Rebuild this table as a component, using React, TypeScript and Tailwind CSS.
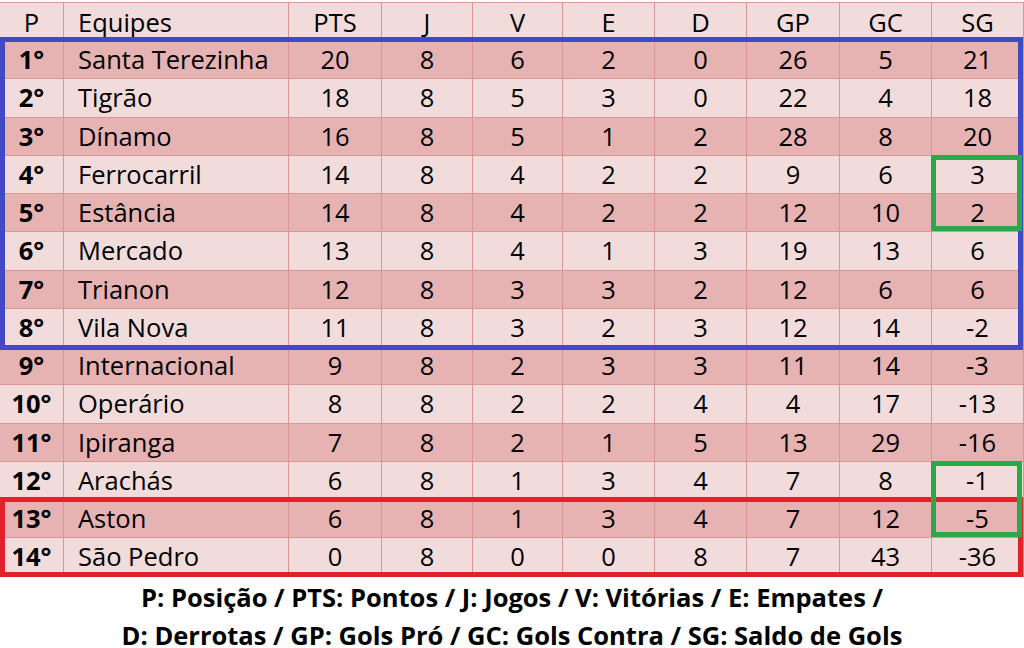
const rows: (string | number)[][] = [
  ['1°', 'Santa Terezinha', 20, 8, 6, 2, 0, 26, 5, 21],
  ['2°', 'Tigrão', 18, 8, 5, 3, 0, 22, 4, 18],
  ['3°', 'Dínamo', 16, 8, 5, 1, 2, 28, 8, 20],
  ['4°', 'Ferrocarril', 14, 8, 4, 2, 2, 9, 6, 3],
  ['5°', 'Estância', 14, 8, 4, 2, 2, 12, 10, 2],
  ['6°', 'Mercado', 13, 8, 4, 1, 3, 19, 13, 6],
  ['7°', 'Trianon', 12, 8, 3, 3, 2, 12, 6, 6],
  ['8°', 'Vila Nova', 11, 8, 3, 2, 3, 12, 14, -2],
  ['9°', 'Internacional', 9, 8, 2, 3, 3, 11, 14, -3],
  ['10°', 'Operário', 8, 8, 2, 2, 4, 4, 17, -13],
  ['11°', 'Ipiranga', 7, 8, 2, 1, 5, 13, 29, -16],
  ['12°', 'Arachás', 6, 8, 1, 3, 4, 7, 8, -1],
  ['13°', 'Aston', 6, 8, 1, 3, 4, 7, 12, -5],
  ['14°', 'São Pedro', 0, 8, 0, 0, 8, 7, 43, -36],
];

const headers = ['P', 'Equipes', 'PTS', 'J', 'V', 'E', 'D', 'GP', 'GC', 'SG'];

const cols =
  'grid grid-cols-[64px_225px_93px_91px_90px_92px_92px_93px_92px_92px]';

export default function App() {
  return (
    <div className="w-[1024px] h-[648px] bg-white font-['Open_Sans','Liberation_Sans',sans-serif] text-[25.5px] text-black">
      <div className="relative pt-[2px]">
        <div className={`${cols} h-[38px] bg-[#f2dcdb] border-t border-[#d99694]`}>
          {headers.map((h, i) => (
            <div
              key={h}
              className={`flex items-center border-r border-b border-[#d99694] ${
                i === 1 ? 'pl-[14px]' : 'justify-center'
              }`}
            >
              {h}
            </div>
          ))}
        </div>
        {rows.map((r, ri) => (
          <div
            key={ri}
            className={`${cols} h-[38.25px] ${ri % 2 === 0 ? 'bg-[#e6b3b2]' : 'bg-[#f2dcdb]'}`}
          >
            {r.map((c, ci) => (
              <div
                key={ci}
                className={`flex items-center border-r border-b border-[#d99694] ${
                  ci === 1 ? 'pl-[14px]' : 'justify-center'
                } ${ci === 0 ? 'font-bold' : ''}`}
              >
                {c}
              </div>
            ))}
          </div>
        ))}

        {/* highlight boxes */}
        <div className="absolute left-0 top-[37px] w-[1023px] h-[313px] border-[5px] border-[#4149c6]" />
        <div className="absolute left-0 top-[497px] w-[1023px] h-[80px] border-[5px] border-[#e2212b]" />
        <div className="absolute left-[931px] top-[155px] w-[91px] h-[76px] border-[5px] border-[#2aa84a]" />
        <div className="absolute left-[931px] top-[461px] w-[91px] h-[76px] border-[5px] border-[#2aa84a]" />
      </div>

      <div className="mt-[8px] flex flex-col gap-[12px] text-center font-bold text-[25.5px] leading-[26px]">
        <p>P: Posição / PTS: Pontos / J: Jogos / V: Vitórias / E: Empates /</p>
        <p>D: Derrotas / GP: Gols Pró / GC: Gols Contra / SG: Saldo de Gols</p>
      </div>
    </div>
  );
}
